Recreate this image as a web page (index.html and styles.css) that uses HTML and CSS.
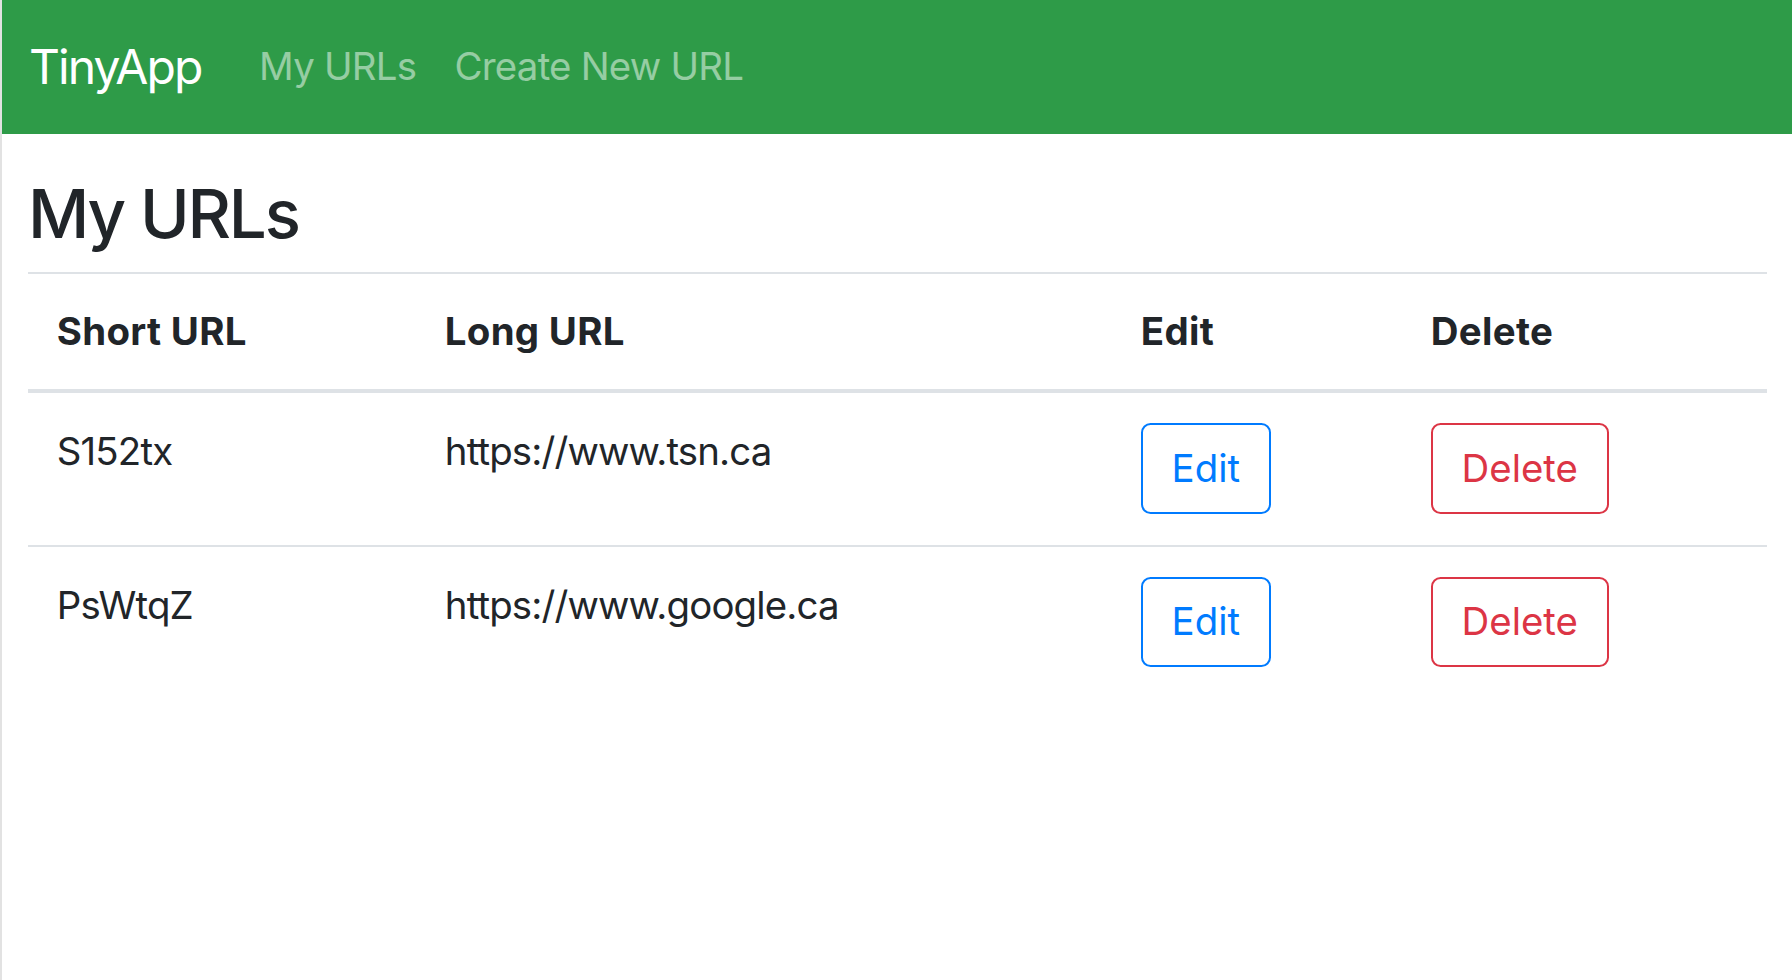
FILE: index.html
```html
<!DOCTYPE html>
<html lang="en">
<head>
<meta charset="utf-8">
<title>TinyApp</title>
<link rel="stylesheet" href="styles.css">
</head>
<body>
<nav class="navbar">
  <a class="brand" href="#">TinyApp</a>
  <a class="nav-link" href="#">My URLs</a>
  <a class="nav-link" href="#">Create New URL</a>
</nav>
<main class="content">
  <h1 class="page-title">My URLs</h1>
  <table class="url-table">
    <colgroup>
      <col class="col-short">
      <col class="col-long">
      <col class="col-edit">
      <col class="col-delete">
    </colgroup>
    <thead>
      <tr>
        <th>Short URL</th>
        <th>Long URL</th>
        <th>Edit</th>
        <th>Delete</th>
      </tr>
    </thead>
    <tbody>
      <tr>
        <td>S152tx</td>
        <td>https://www.tsn.ca</td>
        <td><button class="btn btn-edit">Edit</button></td>
        <td><button class="btn btn-delete">Delete</button></td>
      </tr>
      <tr>
        <td>PsWtqZ</td>
        <td>https://www.google.ca</td>
        <td><button class="btn btn-edit">Edit</button></td>
        <td><button class="btn btn-delete">Delete</button></td>
      </tr>
    </tbody>
  </table>
</main>
</body>
</html>
```

FILE: styles.css
```css
html, body {
  margin: 0;
  padding: 0;
  height: 100%;
}

body {
  box-sizing: border-box;
  border-left: 2px solid #e2e2e2;
  background: #ffffff;
  color: #212529;
  font-family: Inter, "Liberation Sans", Arial, sans-serif;
  font-size: 38.4px;
  line-height: 1.5;
  letter-spacing: -0.022em;
}

.navbar {
  display: flex;
  align-items: center;
  height: 134px;
  box-sizing: border-box;
  padding: 0 27px;
  background: #2e9b48;
}

.brand {
  color: #ffffff;
  text-decoration: none;
  font-size: 48px;
  line-height: 1.5;
  letter-spacing: -0.04em;
  margin-right: 38.4px;
}

.nav-link {
  color: rgba(255, 255, 255, 0.5);
  text-decoration: none;
  font-size: 38.4px;
  letter-spacing: -0.02em;
  padding: 0 19.2px;
}

.content {
  padding: 0 25px 0 26px;
}

.page-title {
  margin: 40px 0 17.6px;
  font-size: 67.2px;
  font-weight: 500;
  line-height: 1.2;
  letter-spacing: -0.032em;
}

.url-table {
  width: 100%;
  border-collapse: collapse;
}

.col-short { width: 388px; }
.col-long { width: 696px; }
.col-edit { width: 290px; }

.url-table th,
.url-table td {
  padding: 28.8px;
  text-align: left;
  border-top: 2.4px solid #dee2e6;
}

.url-table th {
  font-weight: 700;
  letter-spacing: 0.008em;
  vertical-align: bottom;
  border-bottom: 4.8px solid #dee2e6;
}

.url-table td {
  vertical-align: top;
  padding-top: 30px;
  padding-bottom: 31px;
}

.url-table tbody tr:first-child td {
  border-top: 0;
}

.btn {
  font-family: inherit;
  font-size: 38.4px;
  line-height: 1.5;
  letter-spacing: 0;
  padding: 14.4px 28.8px;
  border: 2.4px solid;
  border-radius: 9.6px;
  background: transparent;
  cursor: pointer;
}

.btn-edit {
  color: #007bff;
  border-color: #007bff;
}

.btn-delete {
  color: #dc3545;
  border-color: #dc3545;
}
```
